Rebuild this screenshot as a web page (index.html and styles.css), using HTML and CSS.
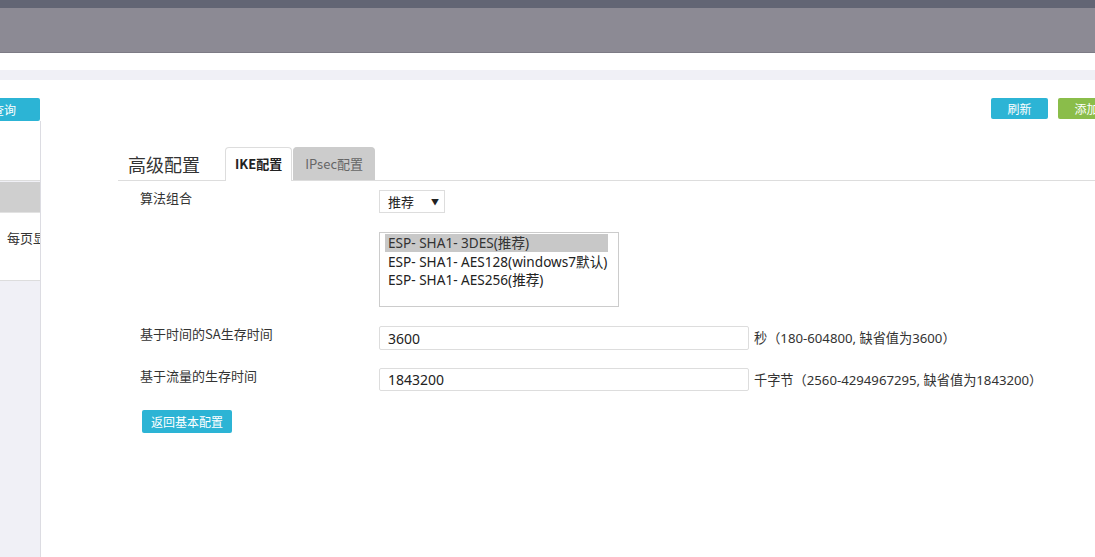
FILE: index.html
```html
<!DOCTYPE html>
<html lang="zh-CN">
<head>
  <meta charset="UTF-8" />
  <meta name="viewport" content="width=device-width, initial-scale=1" />
  <title>高级配置</title>
  <link rel="stylesheet" href="styles.css">
</head>
<body>

<div class="page">
  <header class="topbar">
    <div class="topbar-strip"></div>
    <div class="topbar-main"></div>
  </header>
  <div class="subbar"></div>

  <div class="content">
    <aside class="sidebar">
      <div class="sidebar-tools">
        <button class="btn btn-blue btn-query">查询</button>
      </div>
      <div class="sidebar-box">
        <div class="sidebar-blank"></div>
        <div class="sidebar-head"></div>
        <div class="sidebar-row"><span>每页显示 10 条</span></div>
      </div>
    </aside>

    <main class="main">
      <div class="toolbar">
        <button class="btn btn-blue">刷新</button>
        <button class="btn btn-green">添加</button>
      </div>

      <section class="config">
        <div class="config-head">
          <h2>高级配置</h2>
          <ul class="tabs">
            <li class="tab active">IKE配置</li>
            <li class="tab">IPsec配置</li>
          </ul>
        </div>

        <div class="form">
          <div class="form-row">
            <label>算法组合</label>
            <div class="select">
              <span>推荐</span>
              <span class="arrow">&#9660;</span>
            </div>
          </div>

          <div class="form-row">
            <label></label>
            <div class="listbox">
              <div class="option selected">ESP- SHA1- 3DES(推荐)</div>
              <div class="option">ESP- SHA1- AES128(windows7默认)</div>
              <div class="option">ESP- SHA1- AES256(推荐)</div>
            </div>
          </div>

          <div class="form-row">
            <label>基于时间的SA生存时间</label>
            <input class="field" type="text" value="3600" />
            <span class="hint">秒（180-604800, 缺省值为3600）</span>
          </div>

          <div class="form-row">
            <label>基于流量的生存时间</label>
            <input class="field field-short" type="text" value="1843200" />
            <span class="hint">千字节（2560-4294967295, 缺省值为1843200）</span>
          </div>

          <button class="btn btn-blue btn-back">返回基本配置</button>
        </div>
      </section>
    </main>
  </div>
</div>

</body>
</html>
```

FILE: styles.css
```css
html, body {
  margin: 0;
  height: 100%;
  overflow: hidden;
}
body {
  font-family: "Noto Sans", "Noto Sans CJK SC", sans-serif;
  font-size: 13px;
  color: #333;
  background: #fff;
}
.page {
  width: 1180px;
  margin-left: -60px;
  height: 100%;
  display: flex;
  flex-direction: column;
}
.topbar-strip {
  height: 8px;
  background: #626574;
}
.topbar-main {
  height: 44px;
  background: #8c8a94;
  border-bottom: 1px solid #7d7b85;
}
.subbar {
  height: 10px;
  margin-top: 17px;
  background: #f0f0f6;
}
.content {
  flex: 1;
  display: flex;
}
.btn {
  border: none;
  border-radius: 2px;
  color: #fff;
  font-family: "Noto Sans CJK SC", sans-serif;
  font-size: 12px;
  width: 57px;
  height: 21px;
  padding: 0;
  cursor: pointer;
}
.btn-blue {
  background: #2cb4d5;
}
.btn-green {
  background: #8abd4a;
}

/* sidebar (scrolled partly out of view) */
.sidebar {
  width: 101px;
  display: flex;
  flex-direction: column;
}
.sidebar-tools {
  padding-top: 18px;
  background: #fff;
  display: flex;
  justify-content: flex-end;
  padding-right: 1px;
}
.btn-query {
  width: 72px;
  height: 23px;
}
.sidebar-box {
  flex: 1;
  background: #f0f0f6;
  border-right: 1px solid #dcdce2;
}
.sidebar-blank {
  height: 59px;
  background: #fff;
  border-bottom: 1px solid #dddddd;
}
.sidebar-head {
  height: 30px;
  margin-top: 1px;
  background: #cfcfcf;
  border-bottom: 1px solid #e2e2e2;
}
.sidebar-row {
  height: 50px;
  padding: 17px 0 0 67px;
  background: #fff;
  border-bottom: 1px solid #dddddd;
  line-height: 15px;
  white-space: nowrap;
  overflow: hidden;
  font-family: "Noto Sans CJK SC", sans-serif;
  font-size: 13px;
}

/* main area */
.main {
  flex: 1;
}
.toolbar {
  padding-top: 18px;
  padding-right: 5px;
  display: flex;
  justify-content: flex-end;
  gap: 10px;
}
.config {
  margin-top: 29px;
  margin-left: 77px;
}
.config-head {
  display: flex;
  align-items: flex-end;
  height: 32px;
  border-bottom: 1px solid #dddddd;
}
.config-head h2 {
  margin: 0 25px 0 10px;
  align-self: center;
  font-family: "Noto Sans CJK SC", sans-serif;
  font-size: 18px;
  font-weight: normal;
  line-height: 24px;
  color: #333;
}
.tabs {
  list-style: none;
  margin: 0 0 -1px;
  padding: 0;
  display: flex;
  gap: 1px;
}
.tab {
  height: 32px;
  line-height: 32px;
  padding: 0 11px;
  border: 1px solid #cccccc;
  border-bottom: none;
  border-radius: 4px 4px 0 0;
  background: #cccccc;
  color: #666;
  font-family: "Noto Sans CJK SC", sans-serif;
  font-size: 13px;
}
.tab.active {
  background: #fff;
  border-color: #dddddd;
  color: #222;
  font-weight: bold;
  padding: 0 9px;
  height: 33px;
}

/* form */
.form {
  padding: 9px 0 0 22px;
}
.form-row {
  display: flex;
  align-items: flex-start;
  margin-bottom: 19px;
}
.form-row:nth-child(3) {
  margin-bottom: 18px;
}
.form-row:nth-child(4) {
  margin-bottom: 18px;
}
.form-row label {
  width: 239px;
  flex: none;
  line-height: 15px;
  font-family: "Noto Sans CJK SC", sans-serif;
  font-size: 13px;
  color: #333;
}
.select {
  width: 66px;
  height: 23px;
  box-sizing: border-box;
  border: 1px solid #dddddd;
  display: flex;
  align-items: center;
  justify-content: space-between;
  padding: 0 5px 0 8px;
  font-family: "Noto Sans CJK SC", sans-serif;
  font-size: 13px;
  color: #222;
}
.select .arrow {
  font-size: 8px;
}
.listbox {
  width: 240px;
  height: 75px;
  box-sizing: border-box;
  border: 1px solid #cccccc;
  padding: 1px 10px 0 5px;
}
.option {
  height: 18.5px;
  line-height: 18px;
  padding-left: 3px;
  font-size: 13.6px;
  color: #222;
  white-space: nowrap;
}
.option.selected {
  background: #c8c8c8;
  color: #333;
  height: 17.5px;
  margin-bottom: 1px;
}
.field {
  width: 370px;
  height: 24px;
  box-sizing: border-box;
  border: 1px solid #dddddd;
  border-radius: 2px;
  padding: 0 8px;
  margin: 0;
  font-family: "Noto Sans", sans-serif;
  font-size: 14px;
  color: #222;
  outline: none;
}
.field-short {
  height: 23px;
}
.hint {
  margin-left: 5px;
  line-height: 24px;
  font-size: 13.2px;
  color: #333;
  white-space: nowrap;
}
.btn-back {
  width: 90px;
  height: 23px;
  margin-left: 2px;
  display: block;
}
```
